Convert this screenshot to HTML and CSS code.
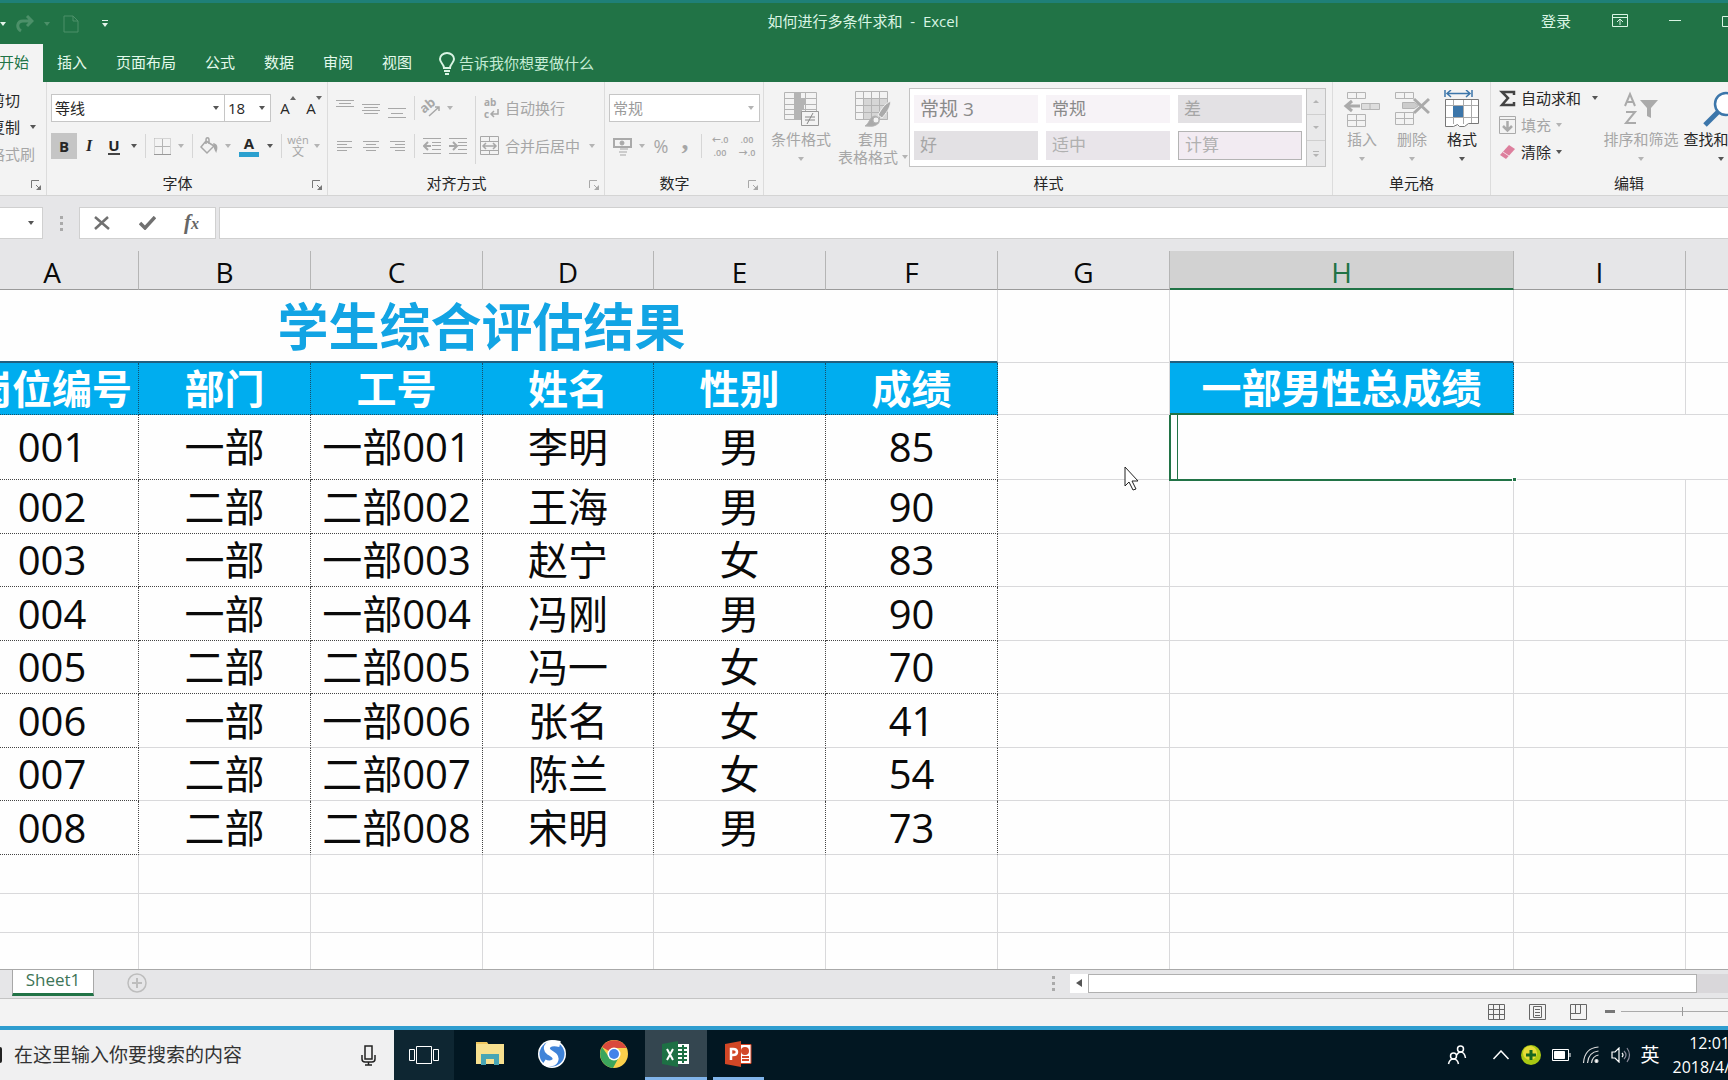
FILE: index.html
```html
<!DOCTYPE html>
<html lang="zh-CN">
<head>
<meta charset="utf-8">
<title>如何进行多条件求和 - Excel</title>
<link rel="stylesheet" href="styles.css">
</head>
<body>
<header class="titlebar">
  <div class="quick">
    <button class="plain" aria-label="撤消选项"><i class="caret light"></i></button>
    <button class="plain" aria-label="恢复"><svg width="18" height="18" viewBox="0 0 18 18" fill="none" stroke="#4c9069" stroke-width="3"><path d="M5 16C0 13 1 6 7 6h8M11 1l5 5-5 5"/></svg></button>
    <button class="plain" aria-label="恢复选项"><i class="caret faint"></i></button>
    <button class="plain doc" aria-label="新建"><svg width="16" height="18" viewBox="0 0 16 18" fill="none" stroke="#4c9069"><path d="M1 1h9l5 5v11H1zM10 1v5h5"/></svg></button>
    <button class="plain" aria-label="自定义"><svg width="6" height="7" viewBox="0 0 6 7" fill="#e4f3ea"><path d="M0 0h6v1H0zM0 3h6L3 7z"/></svg></button>
  </div>
  <h1>如何进行多条件求和 &nbsp;- &nbsp;Excel</h1>
  <div class="window">
    <button class="plain">登录</button>
    <button class="plain" aria-label="功能区显示选项"><svg width="16" height="13" viewBox="0 0 16 13" fill="none" stroke="#d9f5e4"><path d="M.5.5h15v12H.5zM.5 3.500h15M8 11V5M5 8l3-3 3 3"/></svg></button>
    <button class="plain" aria-label="最小化"><svg width="12" height="13" viewBox="0 0 12 13" stroke="#d9f5e4"><path d="M0 6.500h12"/></svg></button>
    <button class="plain" aria-label="还原"><svg width="12" height="13" viewBox="0 0 12 13" fill="none" stroke="#d9f5e4"><path d="M.5 2.500h9v10h-9z"/></svg></button>
  </div>
</header>
<nav class="tabs">
  <a class="active" href="#home">开始</a>
  <a href="#insert">插入</a>
  <a href="#layout">页面布局</a>
  <a href="#formula">公式</a>
  <a href="#data">数据</a>
  <a href="#review">审阅</a>
  <a href="#view">视图</a>
  <a class="tell" href="#tell"><svg width="16" height="23" viewBox="0 0 16 23" fill="none" stroke="#d9f5e4" stroke-width="2"><path d="M5 16c0-4-4-5-4-9a7 6 0 0 1 14 0c0 4-4 5-4 9zM5 19h6M6 22h4"/></svg>告诉我你想要做什么</a>
</nav>
<section class="ribbon" id="home">
  <div class="group clip">
    <div class="stack">
      <button>剪切</button>
      <button>复制<i class="caret"></i></button>
      <button disabled>格式刷</button>
    </div>
    <div class="label"><span></span><svg class="launch" viewBox="0 0 11 11"><path d="M.5 8V.5H8M5 5l4 4"/><path class="tip" d="M10 5v5H5z"/></svg></div>
  </div>
  <div class="group font">
    <div class="rows">
      <div class="row">
        <div class="combo name"><input value="等线" aria-label="字体"><i class="caret"></i></div><div class="combo size"><input value="18" aria-label="字号"><i class="caret"></i></div>
        <button class="w26 grow" aria-label="增大字号">A<svg width="6" height="4"><path d="M0 4l3-4 3 4z"/></svg></button>
        <button class="w26 grow" aria-label="减小字号">A<svg width="6" height="4"><path d="M0 0l3 4 3-4z"/></svg></button>
      </div>
      <div class="row">
        <button class="w26 on"><b>B</b></button>
        <button class="w24 ital"><b>I</b></button>
        <button class="w26"><b class="under">U</b></button>
        <button class="w14" aria-label="下划线选项"><i class="caret"></i></button>
        <span class="sep"></span>
        <button class="w24" disabled aria-label="边框"><svg width="17" height="17" viewBox="0 0 17 17" fill="none" stroke="#b4b4b4"><path stroke-dasharray="1 1" d="M.5.5h16v16M.5.5v16"/><path d="M8.500 1v15M1 8.500h15"/><path stroke="#999" d="M0 16.500h17"/></svg></button>
        <button class="w14" disabled aria-label="边框选项"><i class="caret"></i></button>
        <span class="sep"></span>
        <button class="w24" disabled aria-label="填充颜色"><svg width="18" height="18" viewBox="0 0 18 18" fill="none" stroke="#a8a8a8" stroke-width="1.500"><path d="M6 4l8 5-7 7-6-6zM6 7V3c0-3 3-3 3 0v4"/><path fill="#a8a8a8" d="M14 7c3 1 3 4 2 7-1-2-2-3-2-7z"/></svg></button>
        <button class="w14" disabled aria-label="填充选项"><i class="caret"></i></button>
        <button class="w28 color"><b>A</b></button>
        <button class="w14" aria-label="颜色选项"><i class="caret"></i></button>
        <span class="sep"></span>
        <button class="w24 pinyin" disabled><small>wén</small>文</button>
        <button class="w14" disabled aria-label="拼音选项"><i class="caret"></i></button>
      </div>
    </div>
    <div class="label"><span>字体</span><svg class="launch" viewBox="0 0 11 11"><path d="M.5 8V.5H8M5 5l4 4"/><path class="tip" d="M10 5v5H5z"/></svg></div>
  </div>
  <div class="group align">
    <div class="cols">
      <div class="rows">
        <div class="row">
          <button class="w26" disabled aria-label="顶端对齐"><svg class="ln" viewBox="0 0 18 26"><path d="M0 5.500h18M3 8.500h12M0 11.500h18"/></svg></button>
          <button class="w26" disabled aria-label="垂直居中"><svg class="ln" viewBox="0 0 18 26"><path d="M0 9.500h18M2 12.500h14M0 15.500h18M2 18.500h14"/></svg></button>
          <button class="w26" disabled aria-label="底端对齐"><svg class="ln" viewBox="0 0 18 26"><path d="M0 13.500h18M3 18.500h12M0 22.500h18"/></svg></button>
          <span class="sep"></span>
          <button class="w24" disabled aria-label="方向"><svg width="20" height="20" viewBox="0 0 20 20"><text x="0" y="12" transform="rotate(-40 7 10)" font-size="13" font-weight="bold" fill="#a8a8a8">ab</text><path d="M8 18L18 9M14 9h4v4" fill="none" stroke="#a8a8a8" stroke-width="1.500"/></svg></button>
          <button class="w14" disabled aria-label="方向选项"><i class="caret"></i></button>
        </div>
        <div class="row">
          <button class="w26" disabled aria-label="左对齐"><svg class="ln" viewBox="0 0 18 26"><path d="M1 8.500h15M1 11.500h10M1 14.500h15M1 17.500h10"/></svg></button>
          <button class="w26" disabled aria-label="居中"><svg class="ln" viewBox="0 0 18 26"><path d="M1 8.500h16M4 11.500h10M1 14.500h16M4 17.500h10"/></svg></button>
          <button class="w26" disabled aria-label="右对齐"><svg class="ln" viewBox="0 0 18 26"><path d="M2 8.500h15M7 11.500h10M2 14.500h15M7 17.500h10"/></svg></button>
          <span class="sep"></span>
          <button class="w26" disabled aria-label="减少缩进"><svg class="ln" viewBox="0 0 18 26"><path d="M0 5.500h18M9 9.500h9M9 12.500h9M9 16.500h9M0 20.500h18"/><path stroke-width="2" d="M8 13H1M5 9l-4 4 4 4"/></svg></button>
          <button class="w26" disabled aria-label="增加缩进"><svg class="ln" viewBox="0 0 18 26"><path d="M0 5.500h18M9 9.500h9M9 12.500h9M9 16.500h9M0 20.500h18"/><path stroke-width="2" d="M0 13h7M4 9l4 4-4 4"/></svg></button>
        </div>
      </div>
      <span class="sep tall"></span>
      <div class="rows">
        <div class="row"><button class="wide" disabled><svg width="20" height="24" viewBox="0 0 20 24"><text x="4" y="10" font-size="10" font-weight="bold" fill="#a8a8a8">ab</text><text x="4" y="22" font-size="10" font-weight="bold" fill="#a8a8a8">c</text><path d="M18 13v5h-6M14 15l-3 3 3 3" fill="none" stroke="#a8a8a8" stroke-width="1.500"/></svg>自动换行</button></div>
        <div class="row"><button class="wide" disabled><svg width="20" height="20" viewBox="0 0 20 20" fill="none" stroke="#a8a8a8"><path d="M.5.5h18v18H.5zM.5 5.500h18M.5 14.500h18M9.500.5v5M9.500 14.500v4"/><path stroke-width="1.500" d="M3 10h13M6 7l-3 3 3 3M13 7l3 3-3 3"/></svg>合并后居中</button><button class="w24" disabled aria-label="合并选项"><i class="caret"></i></button></div>
      </div>
    </div>
    <div class="label"><span>对齐方式</span><svg class="launch dim" viewBox="0 0 11 11"><path d="M.5 8V.5H8M5 5l4 4"/><path class="tip" d="M10 5v5H5z"/></svg></div>
  </div>
  <div class="group num">
    <div class="rows">
      <div class="row"><div class="combo fmt off"><input value="常规" aria-label="数字格式" disabled><i class="caret"></i></div></div>
      <div class="row">
        <button class="w26" disabled aria-label="会计格式"><svg width="19" height="19" viewBox="0 0 19 19" fill="none" stroke="#aaa"><path stroke-width="2" d="M1 2h17v8H1z"/><circle cx="9" cy="6" r="2" fill="#aaa"/><path d="M7 12h8M6 15h8M7 18h6" stroke="#ccc" stroke-width="2"/></svg></button>
        <button class="w14" disabled aria-label="会计选项"><i class="caret"></i></button>
        <button class="w24 big" disabled>%</button>
        <button class="w24 comma" disabled>,</button>
        <span class="sep"></span>
        <button class="w28 dec" disabled><span>←.0</span><span>.00</span></button>
        <button class="w26 dec" disabled><span>.00</span><span>→.0</span></button>
      </div>
    </div>
    <div class="label"><span>数字</span><svg class="launch dim" viewBox="0 0 11 11"><path d="M.5 8V.5H8M5 5l4 4"/><path class="tip" d="M10 5v5H5z"/></svg></div>
  </div>
  <div class="group styles">
    <div class="cols">
      <button class="tile w72" disabled><svg width="37" height="36" viewBox="0 0 37 36" fill="none" stroke="#b4b4b4"><path d="M1.500 1.500h32v27h-32zM1.500 7.500h32M1.500 13.500h32M1.500 18.500h32M1.500 23.500h32M11.500 1v28M22.500 1v28"/><path fill="#b4b4b4" stroke="none" d="M12 2h6v5h5v7h-2v5h-2v9h-7z"/><path fill="#f3f3f3" stroke="#999" d="M18.500 20.500h17v14h-17z"/><path stroke="#888" d="M22 26h10M22 29h10M30 22l-6 11"/></svg><span>条件格式</span><i class="caret"></i></button>
      <button class="tile w72" disabled><svg width="38" height="36" viewBox="0 0 38 36" fill="none" stroke="#b4b4b4"><path fill="#d6d6d6" stroke="none" d="M9 7h25v22H9z"/><path d="M1.500.5h32v28h-32zM1.500 7.500h32M1.500 14.500h32M1.500 21.500h32M9.500 1v28M17.500 1v28M25.500 1v28"/><path fill="#aaa" stroke="#f3f3f3" d="M37 10c-7 3-10 9-13 14l4 3c4-5 8-9 9-17z"/><path fill="#aaa" d="M11 35c5-3 4-9 10-10 5 1 6 7 1 9-3 2-7 1-11 1z"/><circle cx="22" cy="29" r="3" fill="#f3f3f3"/></svg><span>套用</span><span class="inline">表格格式<i class="caret"></i></span></button>
      <div class="gallery">
        <div class="chips">
          <button class="chip song">常规 3</button><button class="chip">常规</button><button class="chip gray">差</button>
          <button class="chip gray">好</button><button class="chip gray2">适中</button><button class="chip boxed">计算</button>
        </div>
        <div class="scroller"><button aria-label="上一行"><svg width="6" height="3"><path d="M0 3l3-3 3 3z"/></svg></button><button aria-label="下一行"><svg width="6" height="3"><path d="M0 0l3 3 3-3z"/></svg></button><button aria-label="更多"><svg width="6" height="6"><path d="M0 0h6v1H0zM0 3l3 3 3-3z"/></svg></button></div>
      </div>
    </div>
    <div class="label"><span>样式</span></div>
  </div>
  <div class="group cells">
    <div class="cols">
      <button class="tile w50" disabled><svg width="38" height="36" viewBox="0 0 38 36" fill="none" stroke="#b4b4b4"><path d="M4.500 1.500h18v6h-18zM13.500 1v6M4.500 23.500h18v12h-18zM4.500 29.500h18M13.500 23v12"/><path fill="#ddd" d="M18.500 12.500h18v6h-18zM27 12v6"/><path stroke="#aaa" stroke-width="3" d="M17 15H3M9 10l-6 5 6 5"/></svg><span>插入</span><i class="caret"></i></button>
      <button class="tile w50" disabled><svg width="36" height="36" viewBox="0 0 36 36" fill="none" stroke="#b4b4b4"><path d="M1.500 1.500h18v6h-18zM10.500 1v6M1.500 21.500h18v12h-18zM1.500 27.500h18M10.500 21v12"/><path fill="#ccc" d="M8.500 11.500h12l4 3-4 3h-12z"/><path stroke="#aaa" stroke-width="3" d="M20 8l15 14M35 8L20 22"/></svg><span>删除</span><i class="caret"></i></button>
      <button class="tile w50"><svg width="36" height="38" viewBox="0 0 36 38" fill="none" stroke="#777"><path stroke="#3c76aa" stroke-width="1.500" d="M1 0v7M28 0v7M3 3.500h23M7 0L3 3.500 7 7M22 0l4 3.500L22 7"/><path fill="#fff" d="M1.500 9.500h33v24h-10l-4 3h-5l-2-2-4 2h-8z"/><path stroke="#aaa" d="M2 15.500h32M2 27.500h32M9.500 10v24M19.500 10v24M27.500 10v23"/><path fill="#3c76aa" stroke="none" d="M9 16h10v11H9z"/></svg><span>格式</span><i class="caret"></i></button>
    </div>
    <div class="label"><span>单元格</span></div>
  </div>
  <div class="group edit">
    <div class="cols">
      <div class="stack">
        <button><svg width="17" height="17" viewBox="0 0 17 17" fill="none" stroke="#444" stroke-width="2.500"><path d="M15 5V2H3l6 6-6 7h12v-3"/></svg>自动求和<i class="caret far"></i></button>
        <button disabled><svg width="17" height="18" viewBox="0 0 17 18" fill="none" stroke="#aaa"><path d="M.5.5h16v17H.5zM.5 3.500h16"/><path stroke-width="2.500" d="M8.500 5v9M4 10l4.500 4.500L13 10"/></svg>填充<i class="caret"></i></button>
        <button><svg width="17" height="16" viewBox="0 0 17 16"><path fill="#dd7f9d" d="M10 1l6 4-9 10-6-4z"/><path stroke="#f6dbe4" d="M4 8l6 4"/></svg>清除<i class="caret"></i></button>
      </div>
      <button class="tile w80" disabled><svg width="36" height="34" viewBox="0 0 36 34" fill="none" stroke="#aaa" stroke-width="2"><path d="M2 14L7 2l5 12M4 10h6M3 20h9L3 31h10"/><path fill="#aaa" stroke="none" d="M17 8h18l-7 8v10l-4-2v-8z"/></svg><span>排序和筛选</span><i class="caret"></i></button>
      <button class="tile w80"><svg width="36" height="36" viewBox="0 0 36 36" fill="none" stroke="#3c76aa"><circle cx="23" cy="13" r="11" fill="#fff" stroke-width="2.500"/><path stroke-width="5" d="M15 21L2 34"/></svg><span>查找和选择</span><i class="caret"></i></button>
    </div>
    <div class="label"><span>编辑</span></div>
  </div>
</section>
<section class="formula">
  <div class="namebox"><i class="caret"></i></div>
  <span class="dots"></span>
  <div class="fx">
    <button class="plain" aria-label="取消"><svg width="16" height="14" viewBox="0 0 16 14" stroke="#707070" stroke-width="2.500"><path d="M1 1l14 12M14 1L1 13"/></svg></button>
    <button class="plain" aria-label="输入"><svg width="17" height="14" viewBox="0 0 17 14" fill="none" stroke="#707070" stroke-width="3.500"><path d="M1 7l5 5L16 1"/></svg></button>
    <button class="plain fxb"><b>f<small>x</small></b></button>
  </div>
  <input class="fin" aria-label="编辑栏">
</section>
<main class="sheet">
  <table>
    <colgroup><col class="ca"><col span="2"><col class="cd"><col span="3"><col class="ch"><col span="2"></colgroup>
    <thead><tr><th>A</th><th>B</th><th>C</th><th>D</th><th>E</th><th>F</th><th>G</th><th class="sel">H</th><th>I</th><th></th></tr></thead>
    <tbody>
      <tr class="r1"><td colspan="6" class="big-title">学生综合评估结果</td><td></td><td class="cap"></td><td></td><td></td></tr>
      <tr class="r2"><td class="h">岗位编号</td><td class="h">部门</td><td class="h">工号</td><td class="h">姓名</td><td class="h">性别</td><td class="h">成绩</td><td></td><td class="h act">一部男性总成绩</td><td></td><td></td></tr>
      <tr class="r3 d"><td>001</td><td>一部</td><td>一部001</td><td>李明</td><td>男</td><td>85</td><td></td><td colspan="3" class="editing"><input class="cell" aria-label="H3"><span class="handle"></span></td></tr>
      <tr class="odd d"><td>002</td><td>二部</td><td>二部002</td><td>王海</td><td>男</td><td>90</td><td></td><td></td><td></td><td></td></tr>
      <tr class="even d"><td>003</td><td>一部</td><td>一部003</td><td>赵宁</td><td>女</td><td>83</td><td></td><td></td><td></td><td></td></tr>
      <tr class="odd d"><td>004</td><td>一部</td><td>一部004</td><td>冯刚</td><td>男</td><td>90</td><td></td><td></td><td></td><td></td></tr>
      <tr class="even d"><td>005</td><td>二部</td><td>二部005</td><td>冯一</td><td>女</td><td>70</td><td></td><td></td><td></td><td></td></tr>
      <tr class="odd d soft"><td>006</td><td>一部</td><td>一部006</td><td>张名</td><td>女</td><td>41</td><td></td><td></td><td></td><td></td></tr>
      <tr class="even d soft"><td>007</td><td>二部</td><td>二部007</td><td>陈兰</td><td>女</td><td>54</td><td></td><td></td><td></td><td></td></tr>
      <tr class="odd d soft"><td>008</td><td>二部</td><td>二部008</td><td>宋明</td><td>男</td><td>73</td><td></td><td></td><td></td><td></td></tr>
      <tr class="e"><td></td><td></td><td></td><td></td><td></td><td></td><td></td><td></td><td></td><td></td></tr>
      <tr class="e"><td></td><td></td><td></td><td></td><td></td><td></td><td></td><td></td><td></td><td></td></tr>
      <tr class="e"><td></td><td></td><td></td><td></td><td></td><td></td><td></td><td></td><td></td><td></td></tr>
    </tbody>
  </table>
  <svg class="pointer" width="15" height="25" viewBox="0 0 15 25"><path fill="#fff" stroke="#222" d="M1 1v19l4-4 4 8 3-1-4-8h6z"/></svg>
</main>
<div class="sheetbar">
  <a class="stab" href="#sheet1">Sheet1</a>
  <button class="plain add" aria-label="新工作表"><svg width="20" height="20" viewBox="0 0 20 20" fill="none" stroke="#bdbdbd" stroke-width="1.500"><circle cx="10" cy="10" r="9"/><path stroke-width="2" d="M10 5v10M5 10h10"/></svg></button>
  <span class="dots"></span>
  <div class="hscroll"><button aria-label="向左滚动"><svg width="6" height="8"><path fill="#555" d="M6 0v8L0 4z"/></svg></button><div class="thumb"></div></div>
</div>
<div class="status">
  <button class="plain" aria-label="普通"><svg width="17" height="16" viewBox="0 0 17 16" fill="none" stroke="#666"><path d="M.5.5h16v15H.5zM.5 5.500h16M.5 10.500h16M5.500.5v15M11.500.5v15"/></svg></button>
  <button class="plain" aria-label="页面布局"><svg width="17" height="16" viewBox="0 0 17 16" fill="none" stroke="#666"><path d="M.5.5h16v15H.5zM4.500 2.500h8v11h-8zM6 5.500h5M6 8.500h5M6 11.500h5"/></svg></button>
  <button class="plain" aria-label="分页预览"><svg width="17" height="16" viewBox="0 0 17 16" fill="none" stroke="#666"><path d="M.5.5h16v15H.5zM.5 9.500h10V.5M5.500.5v9"/></svg></button>
  <div class="zoom"><button class="plain minus" aria-label="缩小"></button><div class="track"><i></i></div></div>
</div>
<footer class="taskbar">
  <div class="search"><input value="在这里输入你要搜索的内容" aria-label="搜索"><svg width="15" height="21" viewBox="0 0 15 21" fill="none" stroke="#222" stroke-width="1.500"><path d="M4 1h7v13H4zM1 10v4q0 3 3 3h7q3 0 3-3v-4M7.500 17v3M4 20h7"/></svg></div>
  <button class="app view" aria-label="任务视图"><svg width="30" height="18" viewBox="0 0 30 18" fill="none" stroke="#fff"><path d="M.5 3.500h5v11h-5zM7.500.5h15v17h-15zM24.500 3.500h5v11h-5z"/></svg></button>
  <button class="app" aria-label="文件资源管理器"><svg width="28" height="24" viewBox="0 0 28 24"><path fill="#f0c75e" d="M0 0h11l2 3H0z"/><path fill="#f7e08f" d="M0 2h28v20H0z"/><path fill="#48a5b5" d="M5 12h18v11h-5v-6h-8v6H5z"/></svg></button>
  <button class="app" aria-label="搜狗浏览器"><svg width="28" height="28" viewBox="0 0 28 28"><circle cx="14" cy="14" r="14" fill="#fff"/><circle cx="14" cy="14" r="12.500" fill="#3f83d8"/><path fill="none" stroke="#fff" stroke-width="6" d="M22 4C10 1 6 8 11 12c5 3 8 5 6 9-2 3-8 3-11 1"/></svg></button>
  <button class="app" aria-label="Chrome"><svg width="28" height="28" viewBox="0 0 28 28"><circle cx="14" cy="14" r="14" fill="#fbd04b"/><path fill="#d9493d" d="M14 14L2 7a14 14 0 0 1 24.500 1H14z"/><path fill="#3ba55c" d="M2 7a14 14 0 0 0 11 21l6-11-5-3-5 3z"/><circle cx="14" cy="14" r="6.500" fill="#fff"/><circle cx="14" cy="14" r="5" fill="#4383ea"/></svg></button>
  <button class="app current" aria-label="Excel"><svg width="28" height="26" viewBox="0 0 28 26"><path fill="#fff" d="M14 3h13v20H14z"/><path fill="none" stroke="#1d7044" stroke-width="2" d="M16 7h9M16 11h9M16 15h9M16 19h9M21 4v18"/><path fill="#1d7044" d="M0 3l16-3v26L0 23z"/><path fill="none" stroke="#fff" stroke-width="2" d="M5 8l6 11M11 8L5 19"/></svg></button>
  <button class="app open" aria-label="PowerPoint"><svg width="28" height="26" viewBox="0 0 28 26"><path fill="#fff" stroke="#d24726" d="M14 3.500h12v19H14z"/><circle cx="20" cy="10" r="4" fill="#d24726"/><path stroke="#d24726" stroke-width="2" d="M17 16h7M17 19h7"/><path fill="#d24726" d="M0 3l16-3v26L0 23z"/><path fill="none" stroke="#fff" stroke-width="2.500" d="M6 19V8h2q4 0 4 3t-4 3H6"/></svg></button>
  <div class="tray">
    <svg class="people" width="20" height="20" viewBox="0 0 19 20" fill="none" stroke="#fff" stroke-width="1.500"><circle cx="13" cy="4" r="3"/><circle cx="6" cy="11" r="3"/><path d="M1 19q1-5 5-5t5 5M9 10q2-3 4-3 4 0 5 6"/></svg>
    <svg width="20" height="10" viewBox="0 0 17 10" fill="none" stroke="#fff" stroke-width="1.500"><path d="M1 9l7.500-8L16 9"/></svg>
    <svg width="20" height="20" viewBox="0 0 20 20"><circle cx="10" cy="10" r="10" fill="#a9c813"/><circle cx="9" cy="8" r="7" fill="#e7dc38"/><path stroke="#16651f" stroke-width="3" d="M10 5v10M5 10h10"/></svg>
    <svg width="20" height="12" viewBox="0 0 20 12" fill="none" stroke="#fff"><path d="M1.500.5h16v11h-16zM19 4v4"/><path fill="#fff" d="M3.500 2.500h10v7h-10z"/></svg>
    <svg width="20" height="18" viewBox="0 0 17 18" fill="none" stroke="#ddd" stroke-width="1.200"><path d="M1 17Q2 2 16 1M5 17Q6 6 16 5M9 17q1-7 7-8"/><circle cx="14" cy="15" r="1.500" fill="#fff"/></svg>
    <svg width="20" height="16" viewBox="0 0 20 16" fill="none" stroke="#fff" stroke-width="1.200"><path d="M1 5h3l4-4v14l-4-4H1zM11 6q2 2 0 4"/><path stroke="#889" d="M13 4q4 4 0 8M16 1q5 7 0 14"/></svg>
    <span class="ime">英</span>
    <div class="clock"><span>12:01</span><span>2018/4/</span></div>
  </div>
</footer>
</body>
</html>
```
FILE: styles.css
```css
* { box-sizing: border-box; }
body {
  margin: 0;
  min-height: 100vh;
  display: flex;
  flex-direction: column;
  overflow: hidden;
  background: #e6e6e8;
  color: #262626;
  font: 15px/20px "Open Sans", "Noto Sans CJK SC", sans-serif;
}
button, input { font: inherit; color: inherit; }
button { border: 0; padding: 0; background: none; white-space: nowrap; }
input { border: 0; padding: 0; min-width: 0; background: none; outline: none; }
a { text-decoration: none; color: inherit; white-space: nowrap; }
svg { flex: none; display: block; }
small { font-size: 11px; }
.plain { display: flex; align-items: center; }

.caret { flex: none; display: inline-block; border: 3px solid transparent; border-top: 4px solid #555; border-bottom: 0; }
.caret.light { border-top-color: #e4f3ea; }
.caret.faint { border-top-color: #4c9069; }
button:disabled { color: #a6a6a6; }
button:disabled .caret, .off .caret { border-top-color: #b4b4b4; }

/* Title bar */
.titlebar {
  display: grid;
  grid-template-columns: 1fr auto 1fr;
  align-items: center;
  height: 44px;
  border-top: 3px solid #1f8078;
  padding: 0 2px 6px 0;
  background: #217346;
  color: #d9f5e4;
}
.titlebar h1 { margin: 0; font-size: 15px; font-weight: 400; }
.quick { display: flex; align-items: center; gap: 10px; padding-top: 6px; }
.quick .doc { padding: 0 13px 0 3px; }
.window { display: flex; justify-content: flex-end; gap: 41px; margin-right: -8px; }

.tabs { display: flex; height: 38px; background: #217346; color: #e4faec; }
.tabs a { display: flex; align-items: center; padding: 0 15px 2px 14px; }
.tabs .active { width: 43px; padding: 0 14px 2px 0; justify-content: flex-end; background: #f3f3f3; color: #217346; }
.tabs .tell { gap: 4px; padding: 0 12px; color: #c6ecd5; }

/* Ribbon */
.ribbon { display: flex; height: 114px; margin-bottom: -1px; background: #f3f3f3; border-bottom: 1px solid #d4d4d4; overflow: hidden; }
.group { flex: none; display: flex; flex-direction: column; justify-content: space-between; padding: 6px 0 1px 4px; border-right: 1px solid #dcdcdc; }
.clip { width: 59px; margin-left: -12px; padding-left: 2px; }
.font { width: 281px; }
.align { width: 277px; }
.num { width: 159px; }
.styles { width: 569px; padding-left: 1px; }
.cells { width: 158px; padding-left: 4px; }
.edit { width: 272px; padding-left: 8px; border-right: 0; }
.label { display: flex; align-items: center; height: 22px; }
.label span { flex: 1; text-align: center; }
.cells .label, .edit .label { padding-right: 4px; }
.launch { width: 11px; height: 11px; margin: 4px 4px 0 8px; fill: none; stroke: #777; }
.launch .tip { fill: #777; stroke: none; }
.launch.dim { opacity: .6; }
.cols { display: flex; }
.rows { display: flex; flex-direction: column; gap: 10px; padding-top: 6px; }
.row { display: flex; height: 28px; align-items: center; }
.row button { display: flex; align-items: center; justify-content: center; height: 26px; }
.sep { width: 1px; height: 24px; margin: 0 4px; background: #d6d6d6; }
.sep.tall { height: 68px; margin-top: 8px; }
.w14 { width: 14px; } .w24 { width: 24px; } .w26 { width: 26px; } .w28 { width: 28px; }
.w50 { width: 50px; } .w72 { width: 72px; } .w80 { width: 80px; }
.stack { display: flex; flex-direction: column; gap: 7px; }
.stack button { display: flex; align-items: center; gap: 5px; height: 20px; }
.clip .stack { padding-top: 2px; }
.clip .stack button { gap: 10px; }
.stack .far { margin-left: 6px; }
.edit .stack { width: 102px; }

.combo { display: flex; align-items: center; height: 28px; padding: 0 5px 0 3px; background: #fff; border: 1px solid #c6c6c6; }
.combo input { flex: 1; width: 0; }
.name { width: 174px; } .size { width: 47px; margin-left: -1px; } .fmt { width: 151px; }
.size + .grow { margin-left: 4px; }
.off { color: #9a9a9a; }
.on { background: #c5c5c5; }
.row .ital { font: italic 16px "Liberation Serif", serif; }
.under { border-bottom: 2px solid #444; line-height: 16px; }
.grow svg { align-self: flex-start; margin-top: 1px; fill: #666; }
.color b { width: 20px; line-height: 17px; border-bottom: 5px solid #2ba0cf; }
.row .pinyin { flex-direction: column; font-size: 12px; line-height: 12px; }
.ln { width: 18px; height: 26px; fill: none; stroke: #a8a8a8; }
.row .wide { gap: 5px; }
.row .big { font-size: 18px; }
.row .comma { font: bold 28px/10px "Liberation Serif", serif; padding-bottom: 12px; }
.row .dec { flex-direction: column; font-size: 9px; line-height: 13px; font-weight: 600; }

.tile { display: flex; flex-direction: column; align-items: center; line-height: 18px; }
.tile svg { margin: 2px 0 2px; height: 38px; }
.tile > .caret { margin-top: 9px; }
.tile .inline { display: flex; align-items: center; gap: 4px; }
.gallery { display: flex; width: 417px; height: 79px; border: 1px solid #c3c3c3; background: #fff; }
.chips { flex: 1; display: grid; grid-template-columns: repeat(3, 1fr); gap: 8px; padding: 6px 4px; }
.chip { padding-left: 6px; text-align: left; font-size: 17px; color: #8a8a8a; background: #f7f3f7; }
.chip.song { font-size: 19px; word-spacing: normal; }
.chip.gray { background: #e3e1e4; color: #a6a6a6; }
.chip.gray2 { background: #e9e5ea; color: #b0b0b0; }
.chip.boxed { background: #f2ebf2; color: #b0b0b0; border: 1px solid #b4b4b4; }
.scroller { display: flex; flex-direction: column; width: 19px; background: #e9e9ea; border-left: 1px solid #c3c3c3; }
.scroller button { flex: 1; display: flex; align-items: center; justify-content: center; }
.scroller button + button { border-top: 1px solid #cfcfcf; }
.scroller svg { fill: #b4b4b4; }

/* Formula bar */
.formula { display: flex; align-items: center; height: 56px; padding: 12px 0; }
.namebox { width: 43px; height: 32px; display: flex; align-items: center; justify-content: flex-end; padding-right: 8px; background: #fff; border: 1px solid #d0d0d0; border-left: 0; }
.dots { width: 3px; height: 15px; margin: 0 16px 0 17px; background: repeating-linear-gradient(#aaa 0 3px, transparent 3px 6px); }
.fx { display: flex; align-items: center; justify-content: space-between; width: 137px; height: 32px; padding: 0 16px 0 14px; background: #fff; border: 1px solid #d0d0d0; }
.fxb { font: italic 21px/24px "Liberation Serif", serif; color: #666; }
.fxb small { font-size: 16px; }
.fin { flex: 1; height: 32px; margin: 0 -1px 0 3px; background: #fff; border: 1px solid #d0d0d0; }

/* Worksheet */
.sheet { position: relative; flex: 1 1 0; min-height: 718px; overflow: hidden; background: #fefefe; border-bottom: 1px solid #a8a8a8; }
.sheet table { width: 1892px; margin-left: -34px; table-layout: fixed; border-spacing: 0; font-size: 40px; line-height: 48px; text-align: center; color: #0a0a0a; }
col { width: 172px; }
.ca { width: 173px; }
.cd { width: 171px; }
.ch { width: 344px; }
th { height: 39px; padding: 4px 0 0; font-size: 28px; line-height: 32px; font-weight: 400; background: #e6e6e8; border-right: 1px solid #b5b5b5; border-bottom: 1px solid #9a9a9a; }
th.sel { background: #d2d2d2; color: #217346; border-bottom: 2px solid #217346; }
td { padding: 0; white-space: nowrap; border-right: 1px solid #d9d9db; border-bottom: 1px solid #d9d9db; }
.r1 td { height: 73px; }
.r1 .big-title { color: #12a4e4; font-size: 51px; font-weight: 700; line-height: 60px; border-bottom: 2px solid #205f80; }
.r1 .cap { border-bottom: 2px solid #205f80; }
.r2 td { height: 52px; }
td.h { background: #00adef; color: #fff; font-weight: 700; border-right: 1px dotted #17506b; border-bottom: 1px dotted #17506b; }
td.act { border-bottom: 2px solid #217346; }
.r3 td { height: 65px; }
.odd td { height: 54px; }
.even td { height: 53px; }
.e td { height: 39px; }
.d td:nth-child(-n+6) { border-right: 1px dotted #444; border-bottom: 1px dotted #444; }
.soft td:nth-child(n+2):nth-child(-n+6) { border-bottom: 1px solid #d9d9db; }
.r3 .editing { position: relative; text-align: left; line-height: 0; }
.cell { position: absolute; top: 0; left: -1px; width: 345px; height: 66px; border-left: 2px solid #217346; border-bottom: 2px solid #217346; background: linear-gradient(#217346, #217346) 6px 0 / 1px 100% no-repeat; font-size: 40px; padding-left: 8px; }
.handle { position: absolute; left: 342px; bottom: -3px; width: 5px; height: 5px; background: #217346; border: 1px solid #fff; }
.pointer { position: absolute; left: 1124px; top: 215px; }

/* Sheet tabs and status */
.sheetbar { display: flex; align-items: center; height: 29px; padding: 0 0 2px 12px; background: #e6e6e8; border-bottom: 1px solid #c4c4c4; }
.stab { align-self: flex-start; width: 82px; height: 26px; text-align: center; font-size: 17px; line-height: 20px; color: #3e7557; background: #fff; border: 1px solid #a8a8a8; border-width: 0 1px 3px; border-bottom-color: #217346; }
.add { margin-left: 33px; margin-right: auto; }
.hscroll { display: flex; width: 658px; height: 19px; background: #d9d7da; }
.hscroll button { display: flex; align-items: center; justify-content: center; width: 18px; background: #fff; }
.thumb { width: 609px; background: #fff; border: 1px solid #b0b0b0; }
.sheetbar .dots { margin-right: 15px; }
.status { display: flex; align-items: center; justify-content: flex-end; gap: 24px; height: 27px; padding-bottom: 2px; background: #f3f3f3; }
.zoom { display: flex; align-items: center; gap: 6px; width: 123px; margin-left: -6px; }
.minus { width: 10px; height: 3px; background: #777; }
.track { flex: 1; height: 1px; background: #aaa; }
.track i { display: block; width: 1px; height: 9px; margin: -4px 0 0 61px; background: #999; }

/* Taskbar */
.taskbar { display: flex; height: 54px; border-top: 4px solid #2f9dcf; background: #021722; color: #fff; }
.search { display: flex; align-items: center; width: 394px; padding-right: 18px; background: #f0f0f1; color: #333; }
.search::before { content: ""; width: 2px; height: 16px; margin-right: 12px; background: #222; border-radius: 0 2px 2px 0; }
.search input { flex: 1; font-size: 19px; line-height: 28px; }
.app { display: flex; align-items: center; justify-content: center; width: 62px; border-bottom: 3px solid transparent; }
.view { width: 60px; margin-right: 5px; background: #0e2632; border-bottom: 0; }
.current { background: #344650; border-bottom-color: #80b4ea; }
.open { border-bottom-color: #80b4ea; width: 51px; margin-left: 6px; }
.tray { display: flex; align-items: center; gap: 10px; margin: 0 -2px 0 auto; }
.people { margin-right: 14px; }
.ime { width: 20px; font-size: 19px; }
.clock { display: flex; flex-direction: column; margin-left: 2px; text-align: right; font-size: 16px; line-height: 24px; }
```
